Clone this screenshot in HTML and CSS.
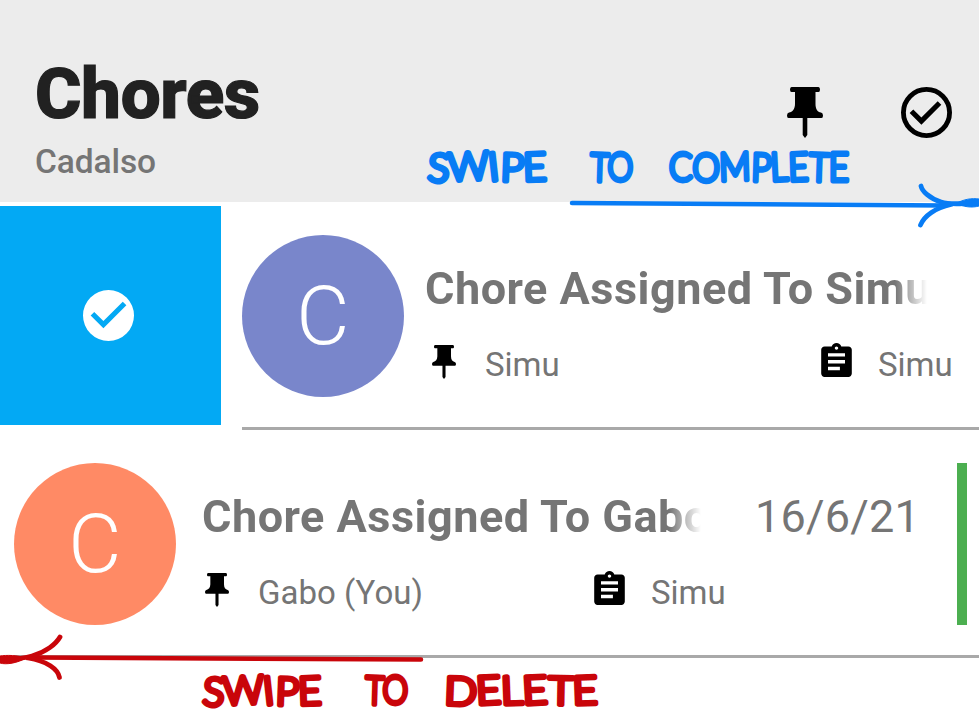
FILE: index.html
```html
<!DOCTYPE html>
<html lang="en">
<head>
<meta charset="utf-8">
<title>Chores</title>
<link rel="stylesheet" href="styles.css">
</head>
<body>
<svg class="defs" aria-hidden="true">
  <symbol id="pin" viewBox="0 0 36 51"><path d="M4.500 0H31.500Q33 0 33 2.500T31.500 5H28.500V17C28.500 22 30.500 25 34 25.500Q36 26 36 28.500T34.500 31H20.300V48L18 51L15.700 48V31H1.500Q0 31 0 28.500T2 25.500C5.500 25 8 22 8 17V5H4.500Q3 5 3 2.500T4.500 0Z"/></symbol>
  <symbol id="clipboard" viewBox="3 1 18 20"><path d="M19 3h-4.180C14.400 1.840 13.300 1 12 1c-1.300 0-2.400.840-2.820 2H5c-1.100 0-2 .900-2 2v14c0 1.100.900 2 2 2h14c1.100 0 2-.900 2-2V5c0-1.100-.900-2-2-2zm-7 0c.550 0 1 .450 1 1s-.450 1-1 1-1-.450-1-1 .450-1 1-1zm2 14H7v-2h7v2zm3-4H7v-2h10v2zm0-4H7V7h10v2z"/></symbol>
  <symbol id="check-outline" viewBox="2 2 20 20"><circle cx="12" cy="12" r="9.050" fill="none" stroke="currentColor" stroke-width="1.900"/><path d="M6.100 11.500l3.900 3.900 7.100-7.100" fill="none" stroke="currentColor" stroke-width="2"/></symbol>
  <symbol id="check-solid" viewBox="2 2 20 20"><path d="M12 2a10 10 0 1 0 0 20 10 10 0 0 0 0-20zm-2 15l-5-5 1.410-1.410L10 14.170l7.590-7.590L19 8z"/></symbol>
</svg>

<header class="header">
  <div class="heading">
    <h1>Chores</h1>
    <p>Cadalso</p>
  </div>
  <div class="actions">
    <svg class="action-pin"><use href="#pin"/></svg>
    <svg class="action-check"><use href="#check-outline"/></svg>
  </div>
</header>

<main>
  <section class="row">
    <div class="swipe"><svg class="swipe-check"><use href="#check-solid"/></svg></div>
    <article class="item">
      <div class="avatar indigo">C</div>
      <div class="body">
        <div class="line"><h2>Chore Assigned To Simu</h2></div>
        <div class="meta">
          <svg class="pin"><use href="#pin"/></svg><span class="assignee">Simu</span>
          <svg class="clip"><use href="#clipboard"/></svg><span>Simu</span>
        </div>
      </div>
    </article>
  </section>
  <section class="row">
    <article class="item">
      <div class="avatar coral">C</div>
      <div class="body">
        <div class="line dated"><h2>Chore Assigned To Gabo</h2><time>16/6/21</time></div>
        <div class="meta">
          <svg class="pin"><use href="#pin"/></svg><span class="assignee">Gabo (You)</span>
          <svg class="clip"><use href="#clipboard"/></svg><span>Simu</span>
        </div>
      </div>
      <div class="status"></div>
    </article>
  </section>
</main>

<svg class="notes" viewBox="0 0 979 723">
  <g class="blue">
    <text x="427" y="181" textLength="120" lengthAdjust="spacingAndGlyphs" rotate="4 -3 -6 2 -2">SWIPE</text>
    <text x="590" y="181" textLength="43" lengthAdjust="spacingAndGlyphs" rotate="2 0">TO</text>
    <text x="669" y="181" textLength="180" lengthAdjust="spacingAndGlyphs" rotate="0 2 -2 2 -3 -2 2 0">COMPLETE</text>
    <path class="shaft" d="M572 203L945 205.500"/>
    <path class="barb" d="M921 186C922 191 929 198 941 202C952 205.500 960 203 981 203"/>
    <path class="barb" d="M920.500 225C924 216 935 208 951 204.500"/>
    <path class="tip" d="M956 203.500C964 199 972 198 979 199V206C972 208 964 207 956 203.500Z"/>
  </g>
  <g class="red">
    <text x="202" y="705" textLength="120" lengthAdjust="spacingAndGlyphs" rotate="4 -3 -6 2 -2">SWIPE</text>
    <text x="365" y="704" textLength="43" lengthAdjust="spacingAndGlyphs" rotate="2 0">TO</text>
    <text x="444" y="704.500" textLength="154" lengthAdjust="spacingAndGlyphs" rotate="2 -3 -2 -3 1 -2">DELETE</text>
    <path class="shaft" d="M421 659.500L34 657.500"/>
    <path class="barb" d="M60 637C56 644 46 652 32 656C22 659 14 659 0 659.500"/>
    <path class="barb" d="M59.500 677.500C58 669 47 661 28 658"/>
    <path class="tip" d="M26 658C18 663 6 665 0 663V656C6 655 18 655 26 658Z"/>
  </g>
</svg>
</body>
</html>
```
FILE: styles.css
```css
* { box-sizing: border-box; margin: 0; padding: 0; }
body {
  width: 979px;
  height: 723px;
  overflow: hidden;
  position: relative;
  background: #fff;
  color: #757575;
  font-family: Roboto, "Liberation Sans", sans-serif;
}
svg { display: block; flex: none; fill: currentColor; }
.defs { display: none; }
h1, h2, p, time, span { white-space: nowrap; }

.header {
  height: 202px;
  padding: 52px 27px 0 35px;
  display: flex;
  justify-content: space-between;
  background: #ececec;
}
h1 {
  font-size: 71px;
  line-height: 84px;
  font-weight: 800;
  letter-spacing: -0.4px;
  color: #212121;
  -webkit-text-stroke: 1.2px #212121;
}
.heading p {
  margin-top: 6px;
  font-size: 33.5px;
  line-height: 40px;
  font-weight: 500;
  letter-spacing: -0.1px;
}
.actions { display: flex; gap: 78px; padding-top: 35px; color: #000; }
.action-pin { width: 36px; height: 51px; }
.action-check { width: 51px; height: 51px; }

.row { height: 228px; display: flex; }
.swipe {
  width: 221px;
  height: 219px;
  margin: 4px -7px 0 0;
  padding-right: 5px;
  flex: none;
  display: flex;
  align-items: center;
  justify-content: center;
  background: #03a9f4;
  color: #fff;
}
.swipe-check { width: 51px; height: 51px; }
.item {
  flex: 1;
  min-width: 0;
  margin-left: 14px;
  padding-top: 33px;
  display: flex;
  border-bottom: 3px solid #a9a9a9;
}
.swipe + .item { margin-left: 28px; }
.avatar {
  width: 162px;
  height: 162px;
  flex: none;
  border-radius: 50%;
  color: #fff;
  font-size: 82px;
  font-weight: 300;
  line-height: 162px;
  text-align: center;
}
.indigo { background: #7986cb; }
.coral { background: #ff8a65; }
.body { flex: 1; min-width: 0; padding: 26px 0 0 21px; }
.line { display: flex; height: 54px; padding-right: 52px; }
.dated { padding: 0 37px 0 5px; }
h2 {
  flex: 1;
  min-width: 0;
  overflow: hidden;
  font-size: 45px;
  line-height: 56px;
  font-weight: 700;
  letter-spacing: 0.5px;
  mask-image: linear-gradient(to left, transparent 0, #000 32px);
}
time { margin-left: 54px; font-size: 45px; line-height: 56px; letter-spacing: 0.2px; }
.meta { display: flex; height: 40px; margin-top: 30px; padding-left: 7px; font-size: 33px; line-height: 40px; }
.dated + .meta { padding-left: 8px; }
.meta svg { color: #000; }
.pin { width: 24px; height: 34px; margin: 0 29px 0 0; }
.assignee { width: 336px; }
.clip { width: 31px; height: 34px; margin: -2px 26px 0 0; }
.status { width: 10px; height: 162px; margin-right: 12px; background: #4caf50; }

.notes { position: absolute; left: 0; top: 0; width: 979px; height: 723px; }
.notes text {
  font-family: Lato, sans-serif;
  font-size: 39px;
  font-weight: 300;
  fill: currentColor;
  stroke: currentColor;
  stroke-width: 4.8px;
  stroke-linecap: round;
  stroke-linejoin: round;
}
.notes path { fill: none; stroke: currentColor; stroke-linecap: round; stroke-linejoin: round; }
.notes .shaft { stroke-width: 4.500px; }
.notes .barb { stroke-width: 4.800px; }
.notes .tip { fill: currentColor; stroke-width: 1px; }
.blue { color: #087cf5; }
.red { color: #c9050a; }
```
